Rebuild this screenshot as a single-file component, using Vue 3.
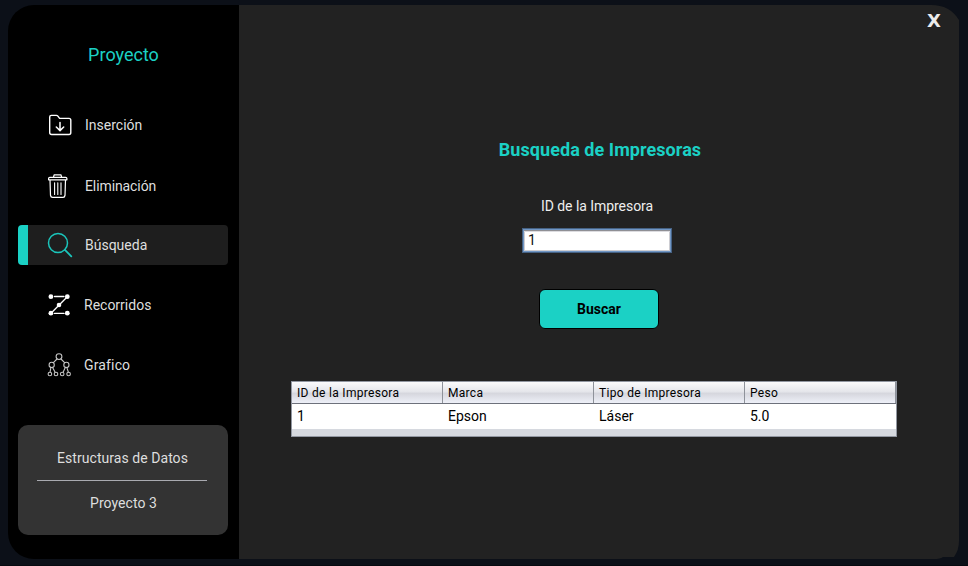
<script setup>
import { ref } from 'vue'

const printerId = ref('1')
const menu = [
  { icon: 'insert', label: 'Inserción' },
  { icon: 'delete', label: 'Eliminación' },
  { icon: 'search', label: 'Búsqueda', active: true },
  { icon: 'walk', label: 'Recorridos' },
  { icon: 'graph', label: 'Grafico' },
]
const columns = ['ID de la Impresora', 'Marca', 'Tipo de Impresora', 'Peso']
const rows = [['1', 'Epson', 'Láser', '5.0']]
</script>

<template>
  <div class="desktop">
    <div class="window">
      <aside class="sidebar">
        <h1 class="brand">Proyecto</h1>
        <nav class="menu">
          <a v-for="item in menu" :key="item.icon" class="item" :class="[item.icon, { active: item.active }]">
            <svg v-if="item.icon === 'insert'" class="icon" viewBox="0 0 24 24">
              <path d="M1.7 18.5V4.1Q1.7 2.4 3.4 2.4H8.4Q9.3 2.4 9.9 3.2L11.6 5.4H21Q22.8 5.4 22.8 7.2V19.6Q22.8 21.5 21 21.5H3.7Q1.7 21.5 1.7 19.5Z" stroke-width="1.4" />
              <path d="M12 9.5V17.5M8.3 14L12 17.6L15.7 14" stroke-width="1.5" />
            </svg>
            <svg v-else-if="item.icon === 'delete'" class="icon" viewBox="0 0 24 24">
              <path d="M5.4 3.2L6.2 0.8H12.9L13.7 3.2M1.8 3.3H17.6Q18.9 3.3 18.9 4.6V5.8H0.6V4.6Q0.6 3.3 1.8 3.3ZM2 6L2.5 21.4Q2.7 23.4 4.6 23.4H15Q16.8 23.4 17 21.4L17.5 6" stroke-width="1.2" />
              <path d="M6.6 8.8V20.4M9.8 8.8V20.4M13 8.8V20.4" stroke-width="1.1" />
            </svg>
            <svg v-else-if="item.icon === 'search'" class="icon" viewBox="0 0 24 24">
              <circle cx="10" cy="10" r="9.5" stroke-width="1.5" />
              <path d="M16.9 16.9L23.3 23.3" stroke-width="1.8" />
            </svg>
            <svg v-else-if="item.icon === 'walk'" class="icon" viewBox="0 0 24 24">
              <path d="M6.5 3.5H16M19.3 3.7L3 20.3M6.5 20.4H16" stroke-width="1.3" />
              <g class="dots">
                <circle cx="2.9" cy="3.7" r="2.4" /><circle cx="19.3" cy="3.7" r="2.4" />
                <circle cx="11" cy="12" r="2.3" />
                <circle cx="2.9" cy="20.2" r="2.4" /><circle cx="19.3" cy="20.2" r="2.4" />
              </g>
            </svg>
            <svg v-else class="icon" viewBox="0 0 24 24">
              <path d="M9 6L5.4 9.6M13 6L16.6 9.6M2.9 14.4L2.1 19M4.6 14.4L7 19M17.3 14.4L15.2 19M18.8 14.4L20.3 19" />
              <circle cx="11" cy="3.6" r="2.9" /><circle cx="3.7" cy="11.9" r="2.6" /><circle cx="18.4" cy="11.9" r="2.6" />
              <circle cx="1.9" cy="21" r="1.8" /><circle cx="8" cy="21" r="1.8" /><circle cx="14.2" cy="21" r="1.8" /><circle cx="20.6" cy="21" r="1.8" />
            </svg>
            <span>{{ item.label }}</span>
          </a>
        </nav>
        <footer class="info">
          <p>Estructuras de Datos</p>
          <hr />
          <p>Proyecto 3</p>
        </footer>
      </aside>

      <main class="content">
        <button class="close" type="button">X</button>
        <h2 class="title">Busqueda de Impresoras</h2>
        <label class="label" for="printer-id">ID de la Impresora</label>
        <input id="printer-id" v-model="printerId" class="field" type="text" />
        <button class="submit" type="button">Buscar</button>
        <div class="table">
          <div class="row head">
            <span v-for="c in columns" :key="c">{{ c }}</span>
          </div>
          <div v-for="r in rows" :key="r[0]" class="row">
            <span v-for="cell in r" :key="cell">{{ cell }}</span>
          </div>
        </div>
      </main>
    </div>
  </div>
</template>

<style>
body { margin: 0; background: #0c1018; }
</style>

<style scoped>
* { box-sizing: border-box; }
.desktop {
  width: 968px;
  height: 566px;
  padding: 5px 9px 6px 8px;
  background: #0c1018;
  border-bottom: 1px solid #070a10;
  font-family: Roboto, sans-serif;
  font-size: 14px;
  overflow: hidden;
}
.window { display: flex; width: 951px; height: 554px; }
.sidebar {
  display: flex;
  flex-direction: column;
  width: 231px;
  padding: 0 11px 24px 10px;
  background: #000;
  border-radius: 26px 0 0 26px;
}
.brand {
  margin: 39px 0 0 1px;
  font-size: 18px;
  line-height: 22px;
  font-weight: 400;
  text-align: center;
  color: #1bd1c5;
}
.menu { display: flex; flex-direction: column; gap: 20px; padding-top: 39px; }
.item {
  display: flex;
  align-items: center;
  gap: 13px;
  height: 40px;
  padding-left: 30px;
  color: #dedede;
  line-height: 20px;
}
.item.insert { height: 41px; padding-bottom: 1px; }
.item.delete { height: 39px; letter-spacing: -0.1px; }
.item.walk, .item.graph { gap: 12px; }
.item.graph { letter-spacing: 0.15px; }
.item.active {
  padding-left: 20px;
  border-left: 10px solid #1bd1c5;
  border-radius: 4px;
  background: #1e1e1e;
}
.icon {
  flex: none;
  width: 24px;
  height: 24px;
  fill: none;
  stroke: #fff;
  stroke-linecap: round;
  stroke-linejoin: round;
  overflow: visible;
}
.active .icon { stroke: #1bc5bb; }
.graph .icon { stroke: #c4c4c4; stroke-width: 1.1; }
.dots { fill: #fff; stroke: none; }
.info {
  height: 110px;
  margin-top: auto;
  padding: 23px 21px 0 19px;
  border-radius: 10px;
  background: #333;
  color: #dedede;
  text-align: center;
}
.info p { margin: 0; padding-left: 1px; line-height: 20px; letter-spacing: 0.05px; }
.info p:last-child { padding-left: 3px; }
.info hr { height: 1px; margin: 12px 0; border: 0; background: #a9aab0; }
.content {
  display: flex;
  flex-direction: column;
  align-items: center;
  width: 720px;
  background: #222;
  clip-path: path('M0 0H692Q711 0 720 15V536Q720 545 715 552H704Q701 554 695 554H0Z');
}
button { padding: 0; font-family: inherit; }
.close {
  align-self: flex-end;
  width: 20px;
  height: 24px;
  margin: 4px 15px 0 0;
  border: 0;
  background: none;
  color: #ebebeb;
  font: 700 18px/24px "DejaVu Sans", sans-serif;
}
.title {
  margin: 106px 0 0 2px;
  font-size: 18px;
  line-height: 22px;
  font-weight: 700;
  letter-spacing: 0.06px;
  color: #1bd1c5;
}
.label { margin: 35px 0 0 -4px; line-height: 20px; letter-spacing: -0.05px; color: #eee; }
.field {
  width: 150px;
  height: 25px;
  margin: 12px 0 0 -4px;
  padding: 0 4px 1px;
  border: 1px solid #466284;
  border-radius: 0;
  outline: 0;
  background: #fff;
  box-shadow: inset 0 0 0 1px #7096c4, inset 0 2px #8f8f94, inset 0 3px #dcdce0, inset 2px 0 #cdcdd2, inset -2px 0 #cdcdd2, inset 0 -2px #cdcdd2;
  padding-left: 5px;
  color: #111;
  font: 14px/18px Roboto, sans-serif;
}
.submit {
  width: 120px;
  height: 40px;
  margin-top: 36px;
  border: 1px solid #000;
  border-radius: 6px;
  background: #1bd1c5;
  color: #000;
  font-size: 14px;
  font-weight: 700;
}
.table {
  width: 606px;
  height: 56px;
  margin: 52px 0 0 -10px;
  border: 1px solid #9297a1;
  background: #d6d9df;
  color: #000;
}
.row { display: grid; grid-template-columns: repeat(4, 151px); height: 25px; background: #fff; line-height: 24px; }
.row span { padding-left: 5px; }
.head {
  height: 22px;
  border-bottom: 1px solid #6d717b;
  background: linear-gradient(#fbfbfc, #e5e6eb 45%, #d6d7de 55%, #eef0f8);
  font-size: 12px;
  line-height: 23px;
  letter-spacing: 0.3px;
}
.head span { height: 21px; border-right: 1px solid #8e929a; }
</style>
